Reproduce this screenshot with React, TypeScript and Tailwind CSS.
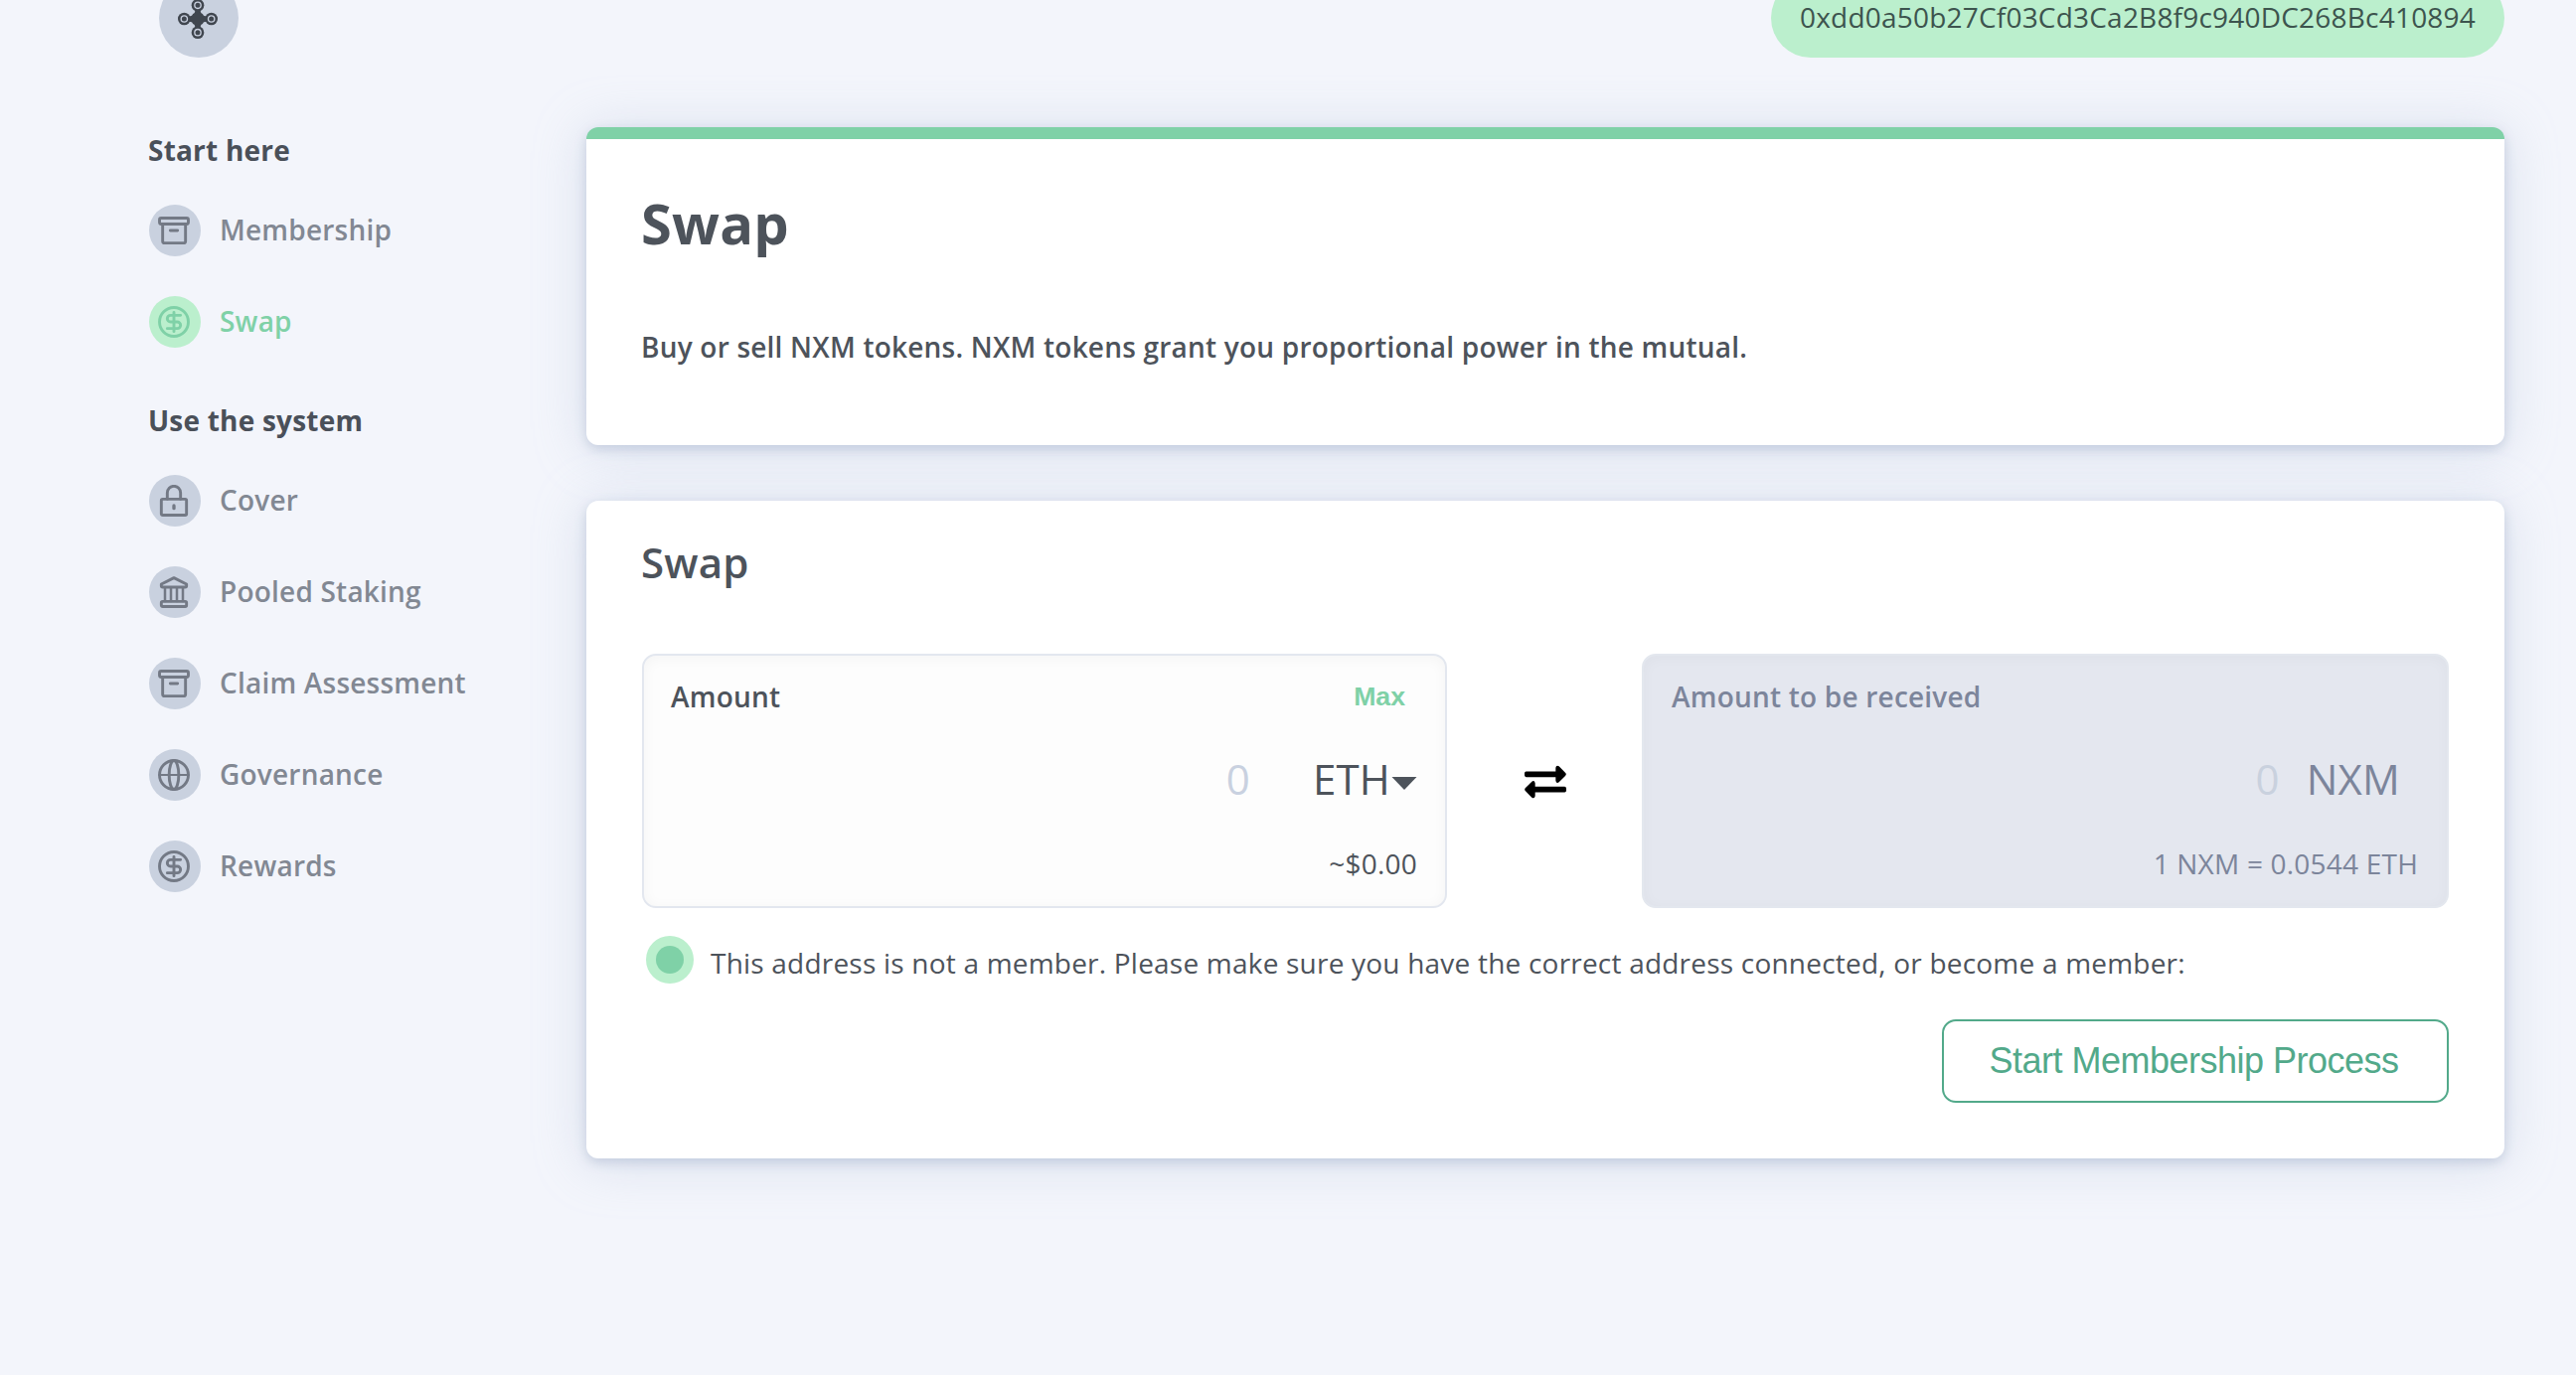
import React from "react";

type IconProps = { children: React.ReactNode };

function Glyph({ children }: IconProps) {
  return (
    <svg
      viewBox="0 0 96 96"
      className="mr-0.5 size-8"
      fill="none"
      stroke="currentColor"
      strokeWidth="8.700"
      strokeLinecap="round"
      strokeLinejoin="round"
    >
      {children}
    </svg>
  );
}

const ArchiveIcon = () => (
  <Glyph>
    <rect x="4.500" y="10.500" width="87" height="18" rx="5" />
    <path d="M14 28V80q0 6 6 6h57q6 0 6-6V28M37 48H59" />
  </Glyph>
);

const DollarIcon = () => (
  <Glyph>
    <circle cx="48" cy="48" r="43.500" />
    <path d="M68 28H38a10 10 0 0 0 0 20H58a10 10 0 0 1 0 20H28M48 19V77" />
  </Glyph>
);

const LockIcon = () => (
  <Glyph>
    <rect x="10" y="43" width="76" height="48.500" rx="4" />
    <path d="M28 43V24a20 20 0 0 1 40 0V43" />
    <path d="M48 63V71" strokeWidth="10" />
  </Glyph>
);

const BankIcon = () => (
  <Glyph>
    <path d="M10 24L48 5L86 24V29Q86 33 82 33H14Q10 33 10 29Z" />
    <rect x="10" y="76" width="76" height="15.500" rx="4" />
    <path d="M21 34V75M39 34V75M57 34V75M75 34V75" strokeWidth="7.500" />
  </Glyph>
);

const GlobeIcon = () => (
  <Glyph>
    <circle cx="48" cy="48" r="43.500" />
    <ellipse cx="48" cy="48" rx="14.500" ry="43.500" />
    <path d="M4 48H92" strokeWidth="6.500" />
  </Glyph>
);

const nodes = [
  [60, 19],
  [60, 101],
  [19, 60],
  [101, 60],
];

function LogoIcon() {
  return (
    <svg viewBox="0 0 120 120" className="mr-0.5 mt-px size-10" fill="#40464f">
      <path d="M52 30H68Q67 44 75 45Q76 53 90 52V68Q76 67 75 75Q67 76 68 90H52Q53 76 45 75Q44 67 30 68V52Q44 53 45 45Q53 44 52 30Z" />
      {nodes.map(([x, y]) => (
        <g key={`${x}-${y}`}>
          <circle cx={x} cy={y} r="19" />
          <circle cx={x} cy={y} r="9.5" fill="none" stroke="#c9d0df" strokeWidth="4" />
        </g>
      ))}
    </svg>
  );
}

function SwapArrows() {
  return (
    <svg viewBox="0 0 126 100" className="h-[34px] w-[42px]" fill="#000">
      <path d="M5 18.500H94V7Q96 -2 104 3L123 22Q128 27 123 32L104 51Q96 56 94 46V35.500H5Q0 35 0 30V24Q0 19 5 18.500Z" />
      <path
        d="M5 18.500H94V7Q96 -2 104 3L123 22Q128 27 123 32L104 51Q96 56 94 46V35.500H5Q0 35 0 30V24Q0 19 5 18.500Z"
        transform="rotate(180 63 50)"
      />
    </svg>
  );
}

type Item = { label: string; icon: React.ReactNode; active?: boolean };

function NavSection({ title, items }: { title: string; items: Item[] }) {
  return (
    <section>
      <h3 className="-ml-px h-[46px] text-[28px] leading-[46px] font-bold text-[#4a5059]">{title}</h3>
      <ul className="mt-8 flex flex-col gap-10">
        {items.map((item) => (
          <li key={item.label} className="flex h-[52px] items-center gap-[19px]">
            <span
              className={
                item.active
                  ? "flex size-[52px] items-center justify-center rounded-full bg-[#bbefcd] text-[#7fd1a7]"
                  : "flex size-[52px] items-center justify-center rounded-full bg-[#c9d1df] text-[#737985]"
              }
            >
              {item.icon}
            </span>
            <span
              className={
                item.active
                  ? "pb-0.5 text-[28px] leading-[50px] font-semibold text-[#7fd1a7]"
                  : "pb-0.5 text-[28px] leading-[50px] font-semibold text-[#828893]"
              }
            >
              {item.label}
            </span>
          </li>
        ))}
      </ul>
    </section>
  );
}

const startItems: Item[] = [
  { label: "Membership", icon: <ArchiveIcon /> },
  { label: "Swap", icon: <DollarIcon />, active: true },
];

const systemItems: Item[] = [
  { label: "Cover", icon: <LockIcon /> },
  { label: "Pooled Staking", icon: <BankIcon /> },
  { label: "Claim Assessment", icon: <ArchiveIcon /> },
  { label: "Governance", icon: <GlobeIcon /> },
  { label: "Rewards", icon: <DollarIcon /> },
];

export default function App() {
  return (
    <div className="h-[1384px] w-[2592px] overflow-hidden bg-[#f3f5fb] font-['Open_Sans',sans-serif] tracking-[0.21px] text-[#4d535b]">
      <header className="-mt-[22px] flex h-20 justify-between pr-[72px] pl-40">
        <div className="flex size-20 items-center justify-center rounded-full bg-[#c9d1df]">
          <LogoIcon />
        </div>
        <div className="flex h-20 w-[738px] items-center justify-center rounded-full bg-[#bbefcd] pb-0.5 text-[28px] whitespace-nowrap text-[#3d544e]">
          0xdd0a50b27Cf03Cd3Ca2B8f9c940DC268Bc410894
        </div>
      </header>

      <div className="flex pt-[70px] pr-[72px] pl-[150px]">
        <nav className="w-[440px] shrink-0">
          <NavSection title="Start here" items={startItems} />
          <div className="h-[50px]" />
          <NavSection title="Use the system" items={systemItems} />
        </nav>

        <main className="flex grow flex-col gap-14">
          <section className="h-[320px] rounded-xl border-t-[12px] border-[#7fd1a7] bg-white px-14 shadow-[0_4px_12px_rgba(110,130,170,0.28),0_4px_52px_rgba(175,190,217,0.4)]">
            <h1 className="mt-[44px] -ml-px h-20 text-[56px] leading-[80px] font-bold">Swap</h1>
            <p className="mt-[65px] -ml-px text-[28px] leading-[40px] font-semibold">
              Buy or sell NXM tokens. NXM tokens grant you proportional power in the mutual.
            </p>
          </section>

          <section className="h-[662px] rounded-xl bg-white px-14 shadow-[0_4px_12px_rgba(110,130,170,0.28),0_4px_52px_rgba(175,190,217,0.4)]">
            <h2 className="-ml-px pt-[32px] text-[42px] leading-[60px] font-semibold">Swap</h2>

            <div className="mt-[62px] flex">
              <div className="h-64 w-[810px] rounded-[14px] border-2 border-[#e3e7ef] bg-[#fdfdfd] px-7 shadow-[inset_0_2px_14px_rgba(0,0,0,0.04)]">
                <div className="mt-[21px] flex h-10 items-center justify-between">
                  <span className="-ml-px text-[28px] leading-10 font-semibold">Amount</span>
                  <span className="mr-3 font-['Liberation_Sans',sans-serif] text-[26.667px] leading-10 font-bold tracking-normal text-[#7fd1a7]">
                    Max
                  </span>
                </div>
                <div className="mt-[33px] flex h-[60px] items-center justify-end text-[42px] leading-[60px]">
                  <span className="mr-[63px] text-[#c9d1e0]">0</span>
                  <span>ETH</span>
                  <svg viewBox="0 0 26 13" className="mt-[9px] ml-px h-[13px] w-[26px]" fill="currentColor">
                    <path d="M0.500 0H25.500L13 13Z" />
                  </svg>
                </div>
                <div className="mt-[35px] text-right text-[28px] leading-10">~$0.00</div>
              </div>

              <div className="flex w-[196px] items-center justify-center pt-0.5 pl-0.5">
                <SwapArrows />
              </div>

              <div className="h-64 w-[812px] rounded-[14px] border-2 border-[#e3e7ee] bg-[#e4e7ef] px-7 text-[#7c859b] shadow-[inset_0_2px_14px_rgba(0,0,0,0.03)]">
                <div className="mt-[21px] text-[28px] leading-10 font-semibold">Amount to be received</div>
                <div className="mt-[33px] flex h-[60px] justify-end pr-[19px] text-[42px] leading-[60px]">
                  <span className="mr-[27px] text-[#c9d1de]">0</span>
                  <span>NXM</span>
                </div>
                <div className="mt-[35px] pr-px text-right text-[28px] leading-10">1 NXM = 0.0544 ETH</div>
              </div>
            </div>

            <div className="mt-7 flex h-12 items-center">
              <span className="ml-1 flex size-12 items-center justify-center rounded-full bg-[#bbefcd]">
                <span className="size-7 rounded-full bg-[#7fd1a7]" />
              </span>
              <span className="mt-1.5 ml-[17px] text-[28px] leading-[42px]">
                This address is not a member. Please make sure you have the correct address connected, or become a
                member:
              </span>
            </div>

            <div className="mt-9 flex justify-end">
              <button className="h-[84px] w-[510px] rounded-[14px] border-2 border-[#52a98a] pr-[3px] font-['Liberation_Sans',sans-serif] text-[36px] tracking-[-0.5px] text-[#52a98a]">
                Start Membership Process
              </button>
            </div>
          </section>
        </main>
      </div>
    </div>
  );
}
